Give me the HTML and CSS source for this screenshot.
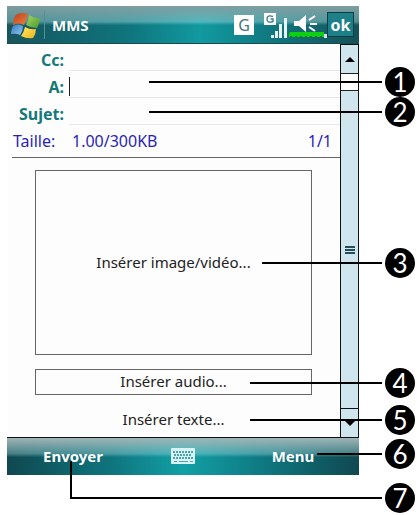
FILE: index.html
```
<!doctype html>
<html lang="fr">
<head>
<meta charset="utf-8">
<title>MMS</title>
<meta name="viewport" content="width=device-width, initial-scale=1">
<link rel="stylesheet" href="styles.css">
</head>
<body>
<figure class="figure">
<div class="phone">
<header class="titlebar">
<svg class="logo" viewBox="0 0 30 30" width="30" height="30" aria-hidden="true">
<defs>
<linearGradient id="red" x1="0" y1="0" x2="1" y2="1"><stop offset="0" stop-color="#b8401c"/><stop offset="1" stop-color="#f08040"/></linearGradient>
<linearGradient id="green" x1="0" y1="0" x2="1" y2="1"><stop offset="0" stop-color="#a8d860"/><stop offset="1" stop-color="#4a9a30"/></linearGradient>
<linearGradient id="blue" x1="0" y1="0" x2="1" y2="1"><stop offset="0" stop-color="#3878c0"/><stop offset="1" stop-color="#90c8f4"/></linearGradient>
<linearGradient id="yellow" x1="0" y1="0" x2="1" y2="1"><stop offset="0" stop-color="#ffec60"/><stop offset="1" stop-color="#f0b020"/></linearGradient>
</defs>
<path fill="url(#red)" d="M4 6Q8 1 17 4Q16 9 13 15Q8 12 2 15Q2 10 4 6Z"/>
<path fill="url(#green)" d="M18 5Q23 9 29 8Q29 13 26 18Q20 18 15 15Q18 10 18 5Z"/>
<path fill="url(#blue)" d="M2 16Q7 13 12 16Q12 21 9 25Q5 23 0 24Q0 20 2 16Z"/>
<path fill="url(#yellow)" d="M14 17Q19 20 25 19Q25 24 22 28Q16 29 10 26Q13 22 14 17Z"/>
</svg>
<h1>MMS</h1>
<span class="gprs">G</span>
<svg class="status" viewBox="0 0 64 28" width="64" height="28" aria-hidden="true">
<path fill="#fff" d="M1 2h12v12H1z"/>
<path fill="none" stroke="#3b7f86" stroke-width="1.4" d="M10 5.500Q4 3.500 4 8Q4 12.500 10 10.500V8H7.500"/>
<path fill="#e8f4f4" d="M8 24h3v3H8zM12 20h3v7h-3zM16 13h3v14h-3zM21 7h3v20h-3z"/>
<path fill="#fff" d="M31 10h5l7-6v17l-7-6h-5z"/>
<path stroke="#fff" stroke-width="2" d="M46 9l6-4M47 13h7M46 16l6 4"/>
<path fill="#0cd010" d="M27 21h34v5H26v-3z"/>
<path stroke="#087a20" stroke-dasharray="2 3" d="M27 25.500h34"/>
<path fill="#dde" d="M61 23h3v4h-3z"/>
</svg>
<button class="ok" type="button">ok</button>
</header>
<div class="main">
<form class="message">
<div class="field"><label for="cc">Cc:</label><input type="text" id="cc"></div>
<div class="field active"><label for="to">A:</label><input type="text" id="to"></div>
<div class="field"><label for="subject">Sujet:</label><input type="text" id="subject"></div>
<div class="size"><span class="name">Taille:</span><span>1.00/300KB</span><span class="page">1/1</span></div>
<div class="slide">
<button class="insert image" type="button">Insérer image/vidéo...</button>
<button class="insert audio" type="button">Insérer audio...</button>
<button class="insert text" type="button">Insérer texte...</button>
</div>
</form>
<div class="scrollbar">
<button type="button" aria-label="Haut"><svg viewBox="0 0 10 5" width="10" height="5"><path d="M0 5l5-5 5 5z"/></svg></button>
<div class="gap"></div>
<div class="thumb"><span class="grip"></span></div>
<button type="button" aria-label="Bas"><svg viewBox="0 0 10 5" width="10" height="5"><path d="M0 0h10l-5 5z"/></svg></button>
</div>
</div>
<footer class="softkeys">
<button type="button">Envoyer</button>
<button type="button" aria-label="Clavier">
<svg viewBox="0 0 24 16" width="24" height="16">
<rect width="24" height="16" rx="1" fill="#d8f4f6"/>
<path stroke="#4fa3ad" stroke-width="2" stroke-dasharray="2 1" d="M2 4h20M3 7h18M2 10h20"/>
<path stroke="#4fa3ad" d="M3 13.500h3M8 13.500h9M19 13.500h3"/>
</svg>
</button>
<button type="button">Menu</button>
</footer>
</div>
<ol class="callouts">
<li class="to">1</li>
<li class="subject">2</li>
<li class="image">3</li>
<li class="audio">4</li>
<li class="text">5</li>
<li class="menu">6</li>
<li class="send">7</li>
</ol>
</figure>
</body>
</html>
```
FILE: styles.css
```
* { box-sizing:border-box; margin:0; padding:0; }
body { padding:6px 0 0 7px; background:#fff; color:#222; font-family:'Noto Sans', sans-serif; font-size:15px; line-height:20px; }
button, input { font:inherit; color:inherit; background:none; border:0; outline:0; }
svg { display:block; }

.figure { position:relative; padding:0 58px 40px 0; }

.titlebar { display:flex; align-items:center; height:38px; padding:0 5px 0 4px; border-bottom:1px solid #1b4a50; color:#fff; background:linear-gradient(#7f9da0, #a8dcdf70 42%, #a8dcdf00 52%), linear-gradient(90deg, #17555c, #0f757e 35%, #119aa0 55%, #0f8088 70%, #165158); }
.titlebar h1 { flex-grow:1; margin-left:3px; padding-left:7px; border-left:1px solid #4d9298; font-size:15px; line-height:28px; }
.gprs { width:20px; height:20px; margin-right:9px; background:#fff; color:#47767b; text-align:center; font-size:16px; }
.ok { width:27px; height:25px; border:1px solid #0d3d44; background:#1d7f88; font-weight:bold; font-size:16px; }

.main { display:flex; }
.message { flex-grow:1; min-width:0; padding-left:5px; background:#fdfdfd; }
.field { display:flex; align-items:center; height:27px; padding-top:6px; }
.field label { width:52px; margin-right:5px; padding-bottom:2px; text-align:right; font-weight:bold; font-size:16px; color:#147878; }
.field input { flex-grow:1; min-width:0; height:21px; border-bottom:1px solid #e8e8e8; }
.field.active input { background:linear-gradient(#222, #222) 0 0 / 1px 19px no-repeat; }
.size { display:flex; height:33px; padding:6px 8px 0 1px; border-bottom:1px solid #666; color:#2a1fb8; font-size:16px; }
.size .name { width:59px; }
.size .page { margin-left:auto; }

.slide { display:flex; flex-direction:column; padding:12px 28px 4px 23px; }
.insert { padding-bottom:2px; border:1px solid #666; }
.insert.image { height:185px; }
.insert.audio { height:26px; margin-top:14px; }
.insert.text { height:26px; margin-top:12px; border:0; }

.scrollbar { display:flex; flex-direction:column; width:19px; border:solid #111; border-width:1px 1px 0; background:#cfe6ee; }
.scrollbar button { display:flex; align-items:center; justify-content:center; height:28px; }
.scrollbar .gap { height:18px; background:#fff; border:solid #222; border-width:1px 0; }
.scrollbar .thumb { display:flex; flex-grow:1; align-items:center; justify-content:center; border-bottom:1px solid #111; }
.grip { width:10px; height:8px; background:repeating-linear-gradient(#274e58 0 2px, #cfe6ee 2px 3px); }

.softkeys { display:grid; grid-template-columns:1fr 1fr 1fr; height:38px; padding:0 11px 2px; border-top:1px solid #111; color:#fff; background:linear-gradient(#9fb4b6, #a8dcdf60 42%, #a8dcdf00 52%), linear-gradient(90deg, #104850, #0f757e 30%, #12a0a6 50%, #0f7d86 70%, #104850); }
.softkeys button { display:flex; align-items:center; justify-content:center; font-weight:bold; }

/* numbered balls on the right, each with a leader line to its left */
.callouts { list-style:none; }
.callouts li { position:absolute; right:2px; width:30px; height:30px; border-radius:15px; background:#000; color:#fff; text-align:center; font-family:Lato, sans-serif; font-size:26px; line-height:30px; }
.callouts li::before { content:''; position:absolute; top:14px; right:33px; width:132px; height:2px; background:#000; }
.callouts .to { top:61px; }
.callouts .subject { top:91px; }
.callouts .image { top:242px; }
.callouts .audio { top:362px; }
.callouts .text { top:399px; }
.callouts .menu { top:433px; }
.callouts .send { top:477px; }
.callouts .to::before, .callouts .subject::before { width:233px; }
.callouts .image::before { width:120px; }
.callouts .menu::before { width:65px; }
.callouts .send::before { top:auto; bottom:14px; width:310px; height:36px; background:none; border:solid #000; border-width:0 0 2px 2px; }
```
